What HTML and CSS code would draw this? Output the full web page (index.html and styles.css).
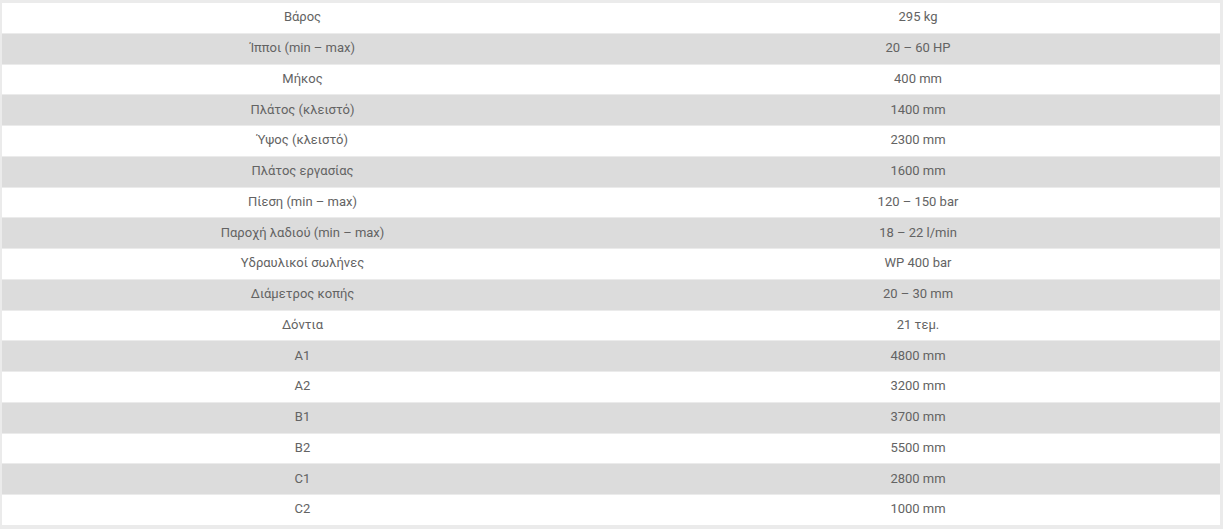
FILE: index.html
```html
<!DOCTYPE html>
<html lang="el">
<head>
<meta charset="utf-8">
<title>Τεχνικά χαρακτηριστικά</title>
<link rel="stylesheet" href="styles.css">
</head>
<body>
<div class="frame">
<table class="specs">
<tbody>
<tr><td class="k">Βάρος</td><td class="v">295 kg</td></tr>
<tr><td class="k">Ίπποι (min – max)</td><td class="v">20 – 60 HP</td></tr>
<tr><td class="k">Μήκος</td><td class="v">400 mm</td></tr>
<tr><td class="k">Πλάτος (κλειστό)</td><td class="v">1400 mm</td></tr>
<tr><td class="k">Ύψος (κλειστό)</td><td class="v">2300 mm</td></tr>
<tr><td class="k">Πλάτος εργασίας</td><td class="v">1600 mm</td></tr>
<tr><td class="k">Πίεση (min – max)</td><td class="v">120 – 150 bar</td></tr>
<tr><td class="k">Παροχή λαδιού (min – max)</td><td class="v">18 – 22 l/min</td></tr>
<tr><td class="k">Υδραυλικοί σωλήνες</td><td class="v">WP 400 bar</td></tr>
<tr><td class="k">Διάμετρος κοπής</td><td class="v">20 – 30 mm</td></tr>
<tr><td class="k">Δόντια</td><td class="v">21 τεμ.</td></tr>
<tr><td class="k">A1</td><td class="v">4800 mm</td></tr>
<tr><td class="k">A2</td><td class="v">3200 mm</td></tr>
<tr><td class="k">B1</td><td class="v">3700 mm</td></tr>
<tr><td class="k">B2</td><td class="v">5500 mm</td></tr>
<tr><td class="k">C1</td><td class="v">2800 mm</td></tr>
<tr><td class="k">C2</td><td class="v">1000 mm</td></tr>
</tbody>
</table>
</div>
</body>
</html>
```
FILE: styles.css
```css
html, body {
  margin: 0;
  padding: 0;
  background: #ffffff;
}
.frame {
  background: #ebebeb;
  padding: 2px 3px 3px 2px;
}
.specs {
  width: 100%;
  table-layout: fixed;
  border-collapse: separate;
  border-spacing: 0 1px;
  font-family: Roboto, "Noto Sans", sans-serif;
  font-size: 13px;
  color: #636363;
}
.specs td {
  background: #ffffff;
  text-align: center;
  padding: 4.25px 0 5.75px;
  line-height: 19.75px;
}
.specs tr:nth-child(even) td {
  background: #dcdcdc;
}
.specs td.k {
  width: 601px;
}
.specs td.v {
  padding-left: 13px;
}
```
